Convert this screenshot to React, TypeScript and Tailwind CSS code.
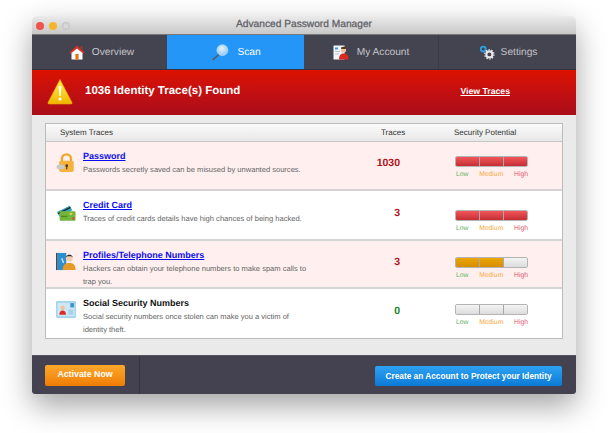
const Home = () => (
  <svg width="16" height="15" viewBox="0 0 16 15"><path d="M8 0.5 L0.5 7.5 L2 8.8 L8 3.5 L14 8.8 L15.5 7.5 Z" fill="#d8341f" /><path d="M11.5 1h2v4l-2-1.8z" fill="#a33" /><path d="M2.5 8 L8 3.5 L13.5 8 V14.5 H2.5 Z" fill="#fff" /><rect x="6.4" y="9" width="3.2" height="5.5" fill="#e8760e" /></svg>
);
const Magnifier = () => (
  <svg width="17" height="17" viewBox="0 0 18 18"><defs><radialGradient id="mg" cx="0.45" cy="0.35" r="0.7"><stop offset="0" stopColor="#e3f2fd" /><stop offset="1" stopColor="#8cc4f2" /></radialGradient></defs><path d="M7.5 11 L1 16.5" stroke="#52606e" strokeWidth="1.6" strokeLinecap="round" /><circle cx="11" cy="6.5" r="5.8" fill="url(#mg)" stroke="#cfe6f8" strokeWidth="0.6" /></svg>
);
const Account = () => (
  <svg width="16" height="15" viewBox="0 0 16 15"><rect x="0.5" y="0.5" width="11" height="14" fill="#f3f6f8" /><rect x="2" y="2.5" width="3" height="2" fill="#3a9be0" /><rect x="2" y="6" width="5" height="1" fill="#b7c6d4" /><rect x="2" y="8.5" width="4" height="1" fill="#b7c6d4" /><circle cx="10.5" cy="5" r="2.6" fill="#f0c3a0" /><path d="M8 2.8 C9 1.5 12 1.5 13 3.2 L12.6 4 L8.4 4Z" fill="#5b3524" /><path d="M6 14.5 C6 10 8 8.5 10.5 8.5 C13.5 8.5 15.5 10 15.5 14.5Z" fill="#d92a22" /></svg>
);
const Gears = () => (
  <svg width="16" height="15" viewBox="0 0 17 15"><circle cx="4.5" cy="3.8" r="2.6" fill="none" stroke="#2d9ee0" strokeWidth="2" /><circle cx="11" cy="9.5" r="3.2" fill="none" stroke="#e8e8ea" strokeWidth="2.2" /><circle cx="11" cy="9.5" r="4.9" fill="none" stroke="#e8e8ea" strokeWidth="1.3" strokeDasharray="1.6 1.47" /></svg>
);
const Warn = () => (
  <svg width="26" height="27" viewBox="0 0 26 27"><defs><linearGradient id="wg" x1="0" y1="0" x2="0" y2="1"><stop offset="0" stopColor="#fff04a" /><stop offset="1" stopColor="#f1b400" /></linearGradient></defs><path d="M13 1.5 L25 24.5 Q25.2 26 24 26 H2 Q0.8 26 1 24.5 Z" fill="url(#wg)" stroke="#e8a700" strokeWidth="0.6" strokeLinejoin="round" /><path d="M11.6 8 H14.4 L13.7 18 H12.3 Z" fill="#fff" /><circle cx="13" cy="21" r="1.6" fill="#fff" /></svg>
);
const Lock = () => (
  <svg width="20" height="20" viewBox="0 0 22 22"><path d="M6.5 9 V6.5 A5 5 0 0 1 16.5 6.5 V9" fill="none" stroke="#f0a62c" strokeWidth="2.6" /><rect x="3.5" y="8.5" width="16" height="12.5" rx="2" fill="#f5b23d" /><rect x="0.5" y="13" width="9" height="5" rx="2.5" fill="#c8c8c8" /><circle cx="11.8" cy="14" r="1.5" fill="#4a3a20" /><rect x="11.2" y="14" width="1.2" height="4" fill="#4a3a20" /></svg>
);
const Cards = () => (
  <svg width="20" height="18" viewBox="0 0 22 18"><path d="M1 8 L15 1 L18 6 L4 13Z" fill="#36a7b8" /><path d="M1.8 9.2 L15.6 2.2 L16.2 3.4 L2.5 10.4Z" fill="#223" /><rect x="4" y="7" width="17.5" height="10.5" rx="1" fill="#75b53c" /><rect x="5.5" y="12" width="7" height="1.5" fill="#4b8a21" /><rect x="15" y="9" width="3" height="2" fill="#efd24a" /><circle cx="19" cy="15" r="1.3" fill="#d94a3a" /></svg>
);
const Profile = () => (
  <svg width="20" height="19" viewBox="0 0 21 19"><rect x="0" y="0.5" width="1.8" height="18" fill="#444b57" /><rect x="1.8" y="0.5" width="9" height="18" fill="#2d8fd0" /><path d="M6 6 L8 11" stroke="#cbe7f8" strokeWidth="1.5" /><circle cx="14" cy="6" r="3.6" fill="#f3cfb0" /><path d="M10.5 5 C10.5 1.5 17.5 1.5 17.5 5 L16 4 L12 4Z" fill="#2c2a28" /><path d="M7 18.5 C7 12.5 10 11 14 11 C18 11 20.5 12.5 20.5 18.5Z" fill="#e79a24" /></svg>
);
const IdCard = () => (
  <svg width="20" height="17" viewBox="0 0 21 16" preserveAspectRatio="none"><rect x="0.3" y="0.3" width="20.4" height="15.4" rx="0.8" fill="#7fc3e8" /><rect x="1.3" y="1.3" width="18.4" height="13.4" fill="#cde7f5" /><rect x="15" y="2" width="4" height="4" fill="#3c92c9" /><circle cx="7" cy="6.5" r="2.3" fill="#f0c3a0" /><path d="M3.5 13 C3.5 10 5 9 7 9 C9 9 10.5 10 10.5 13Z" fill="#dd2a22" /><rect x="13" y="8" width="5" height="5" fill="#a6d2ea" /></svg>
);

const Tab = ({ icon, label, cls }: { icon: React.ReactNode; label: string; cls: string }) => (
  <div className={`flex items-center justify-center pt-[2px] text-[10.2px] ${cls}`}>
    <span className="-mt-[2px]">{icon}</span>
    <span>{label}</span>
  </div>
);

const Meter = ({ segs, top }: { segs: string[]; top: string }) => (
  <div className={`ml-[55px] w-[73px] ${top}`}>
    <div className="flex h-[11px] overflow-hidden rounded-[2px] border border-[#b4b4b4]">
      {segs.map((s, i) => (
        <div key={i} className={`h-full flex-1 ${s} ${i < 2 ? "border-r border-[#a8a8a8]" : ""}`} />
      ))}
    </div>
    <div className="mt-[2px] flex justify-between pl-[1px] text-[6.8px] leading-[12px]">
      <span className="text-[#5fb35f]">Low</span>
      <span className="text-[#f9a83a]">Medium</span>
      <span className="text-[#e0566a]">High</span>
    </div>
  </div>
);

const RED = "bg-gradient-to-b from-[#f2555a] to-[#c42f33]";
const AMB = "bg-gradient-to-b from-[#eba608] to-[#d68e00]";
const EMP = "bg-gradient-to-b from-[#f4f4f4] to-[#dcdcdc]";

type RowProps = { icon: React.ReactNode; iconTop: string; title: string; link?: boolean; desc: string; count: string; countTop: string; green?: boolean; pink?: boolean; segs: string[]; h: string; barTop: string };

const Row = ({ icon, iconTop, title, link, desc, count, countTop, green, pink, segs, h, barTop }: RowProps) => (
  <div className={`grid ${h} grid-cols-[37px_280px_37px_1fr] border-b-2 border-[#d4d4d4] last:border-b-0 ${pink ? "bg-[#fff0ef]" : "bg-white"}`}>
    <div className={`pl-[10px] ${iconTop}`}>{icon}</div>
    <div className="pt-[8px]">
      <div className={`text-[9px] leading-[12px] font-bold ${link ? "text-[#0c0cf0] underline" : "text-[#111]"}`}>{title}</div>
      <div className="mt-[1px] w-[228px] text-[7.55px] leading-[13px] text-[#666]">{desc}</div>
    </div>
    <div className={`${countTop} text-right text-[10.5px] leading-[14px] font-bold ${green ? "text-[#17851f]" : "text-[#b0101a]"}`}>{count}</div>
    <Meter segs={segs} top={barTop} />
  </div>
);

export default function App() {
  return (
    <div className="h-[433px] w-[608px] overflow-hidden bg-white pt-[16px] pl-[32px] font-['Liberation_Sans',Arial,sans-serif] [text-rendering:geometricPrecision]">
      <div className="flex h-[378px] w-[544px] flex-col overflow-hidden rounded-t-[5px] rounded-b-[3px] shadow-[0_12px_30px_rgba(0,0,0,0.36)]">
        <div className="relative flex h-[19px] shrink-0 items-center justify-center border-b border-[#77777c] bg-gradient-to-b from-[#ebebeb] to-[#c8c8c8]">
          <div className="absolute top-[6px] left-[4px] flex gap-[5px]">
            <span className="h-[8px] w-[8px] rounded-full bg-[#f1524a]" />
            <span className="h-[8px] w-[8px] rounded-full bg-[#f7b52c]" />
            <span className="h-[8px] w-[8px] rounded-full border border-[#c0c0c0] bg-[#d6d6d6]" />
          </div>
          <span className="text-[10.2px] text-[#5f5f66] [-webkit-text-stroke:0.25px_#5f5f66]">Advanced Password Manager</span>
        </div>
        <div className="flex h-[34px] shrink-0 bg-[#444350]">
          <Tab icon={<Home />} label="Overview" cls="w-[135px] gap-[7px] pl-[4px] text-[#c3c3c8]" />
          <Tab icon={<Magnifier />} label="Scan" cls="w-[137px] gap-[8px] pl-[2px] bg-[#2396f8] text-white" />
          <Tab icon={<Account />} label="My Account" cls="w-[135px] gap-[8px] border-r border-[#3a3a46] text-[#c3c3c8]" />
          <Tab icon={<Gears />} label="Settings" cls="flex-1 pl-[1px] gap-[6px] text-[#c3c3c8]" />
        </div>
        <div className="flex h-[46px] shrink-0 items-center border-t border-[#34343f] bg-gradient-to-b from-[#dc1200] to-[#aa0d18] pr-[66px] pb-[2px] pl-[15px]">
          <Warn />
          <span className="ml-[12px] flex-1 text-[11.5px] font-bold text-white">1036 Identity Trace(s) Found</span>
          <span className="text-[8.7px] font-bold text-white underline">View Traces</span>
        </div>
        <div className="flex flex-1 flex-col bg-[#eaeaea] pt-[8px] pr-[13px] pl-[13px]">
          <div className="border border-[#bcbcbc]">
            <div className="flex h-[18px] items-center border-b border-[#c8c8c8] bg-gradient-to-b from-[#fafafa] to-[#e8e8e8] pl-[14px] text-[8px] text-[#333]">
              <span className="w-[321px]">System Traces</span>
              <span className="w-[73px]">Traces</span>
              <span>Security Potential</span>
            </div>
            <Row h="h-[49px]" iconTop="pt-[11px]" countTop="pt-[14px]" barTop="pt-[14px]" pink link icon={<Lock />} title="Password" desc="Passwords secretly saved can be misused by unwanted sources." count="1030" segs={[RED, RED, RED]} />
            <Row h="h-[50px]" iconTop="pt-[13px]" countTop="pt-[15px]" barTop="pt-[19px]" link icon={<Cards />} title="Credit Card" desc="Traces of credit cards details have high chances of being hacked." count="3" segs={[RED, RED, RED]} />
            <Row h="h-[48px]" iconTop="pt-[11px]" countTop="pt-[14px]" barTop="pt-[16px]" pink link icon={<Profile />} title="Profiles/Telephone Numbers" desc="Hackers can obtain your telephone numbers to make spam calls to trap you." count="3" segs={[AMB, AMB, EMP]} />
            <Row h="h-[49px]" iconTop="pt-[12px]" countTop="pt-[15px]" barTop="pt-[15px]" icon={<IdCard />} title="Social Security Numbers" desc="Social security numbers once stolen can make you a victim of identity theft." count="0" green segs={[EMP, EMP, EMP]} />
          </div>
        </div>
        <div className="flex h-[39px] shrink-0 items-center border-t border-[#55555f] bg-[#444150]">
          <div className="flex h-full w-[108px] items-center border-r border-[#35343f] pl-[13px]">
            <button className="h-[21px] w-[80px] rounded-[2px] bg-gradient-to-b from-[#fca829] to-[#ef7c02] text-[8.8px] font-bold text-white">Activate Now</button>
          </div>
          <div className="flex flex-1 justify-end pr-[14px]">
            <button className="mt-[2px] h-[20px] w-[187px] rounded-[2px] bg-gradient-to-b from-[#2da2f2] to-[#0a7ad6] text-[8.3px] font-bold text-white">Create an Account to Protect your Identity</button>
          </div>
        </div>
      </div>
    </div>
  );
}
